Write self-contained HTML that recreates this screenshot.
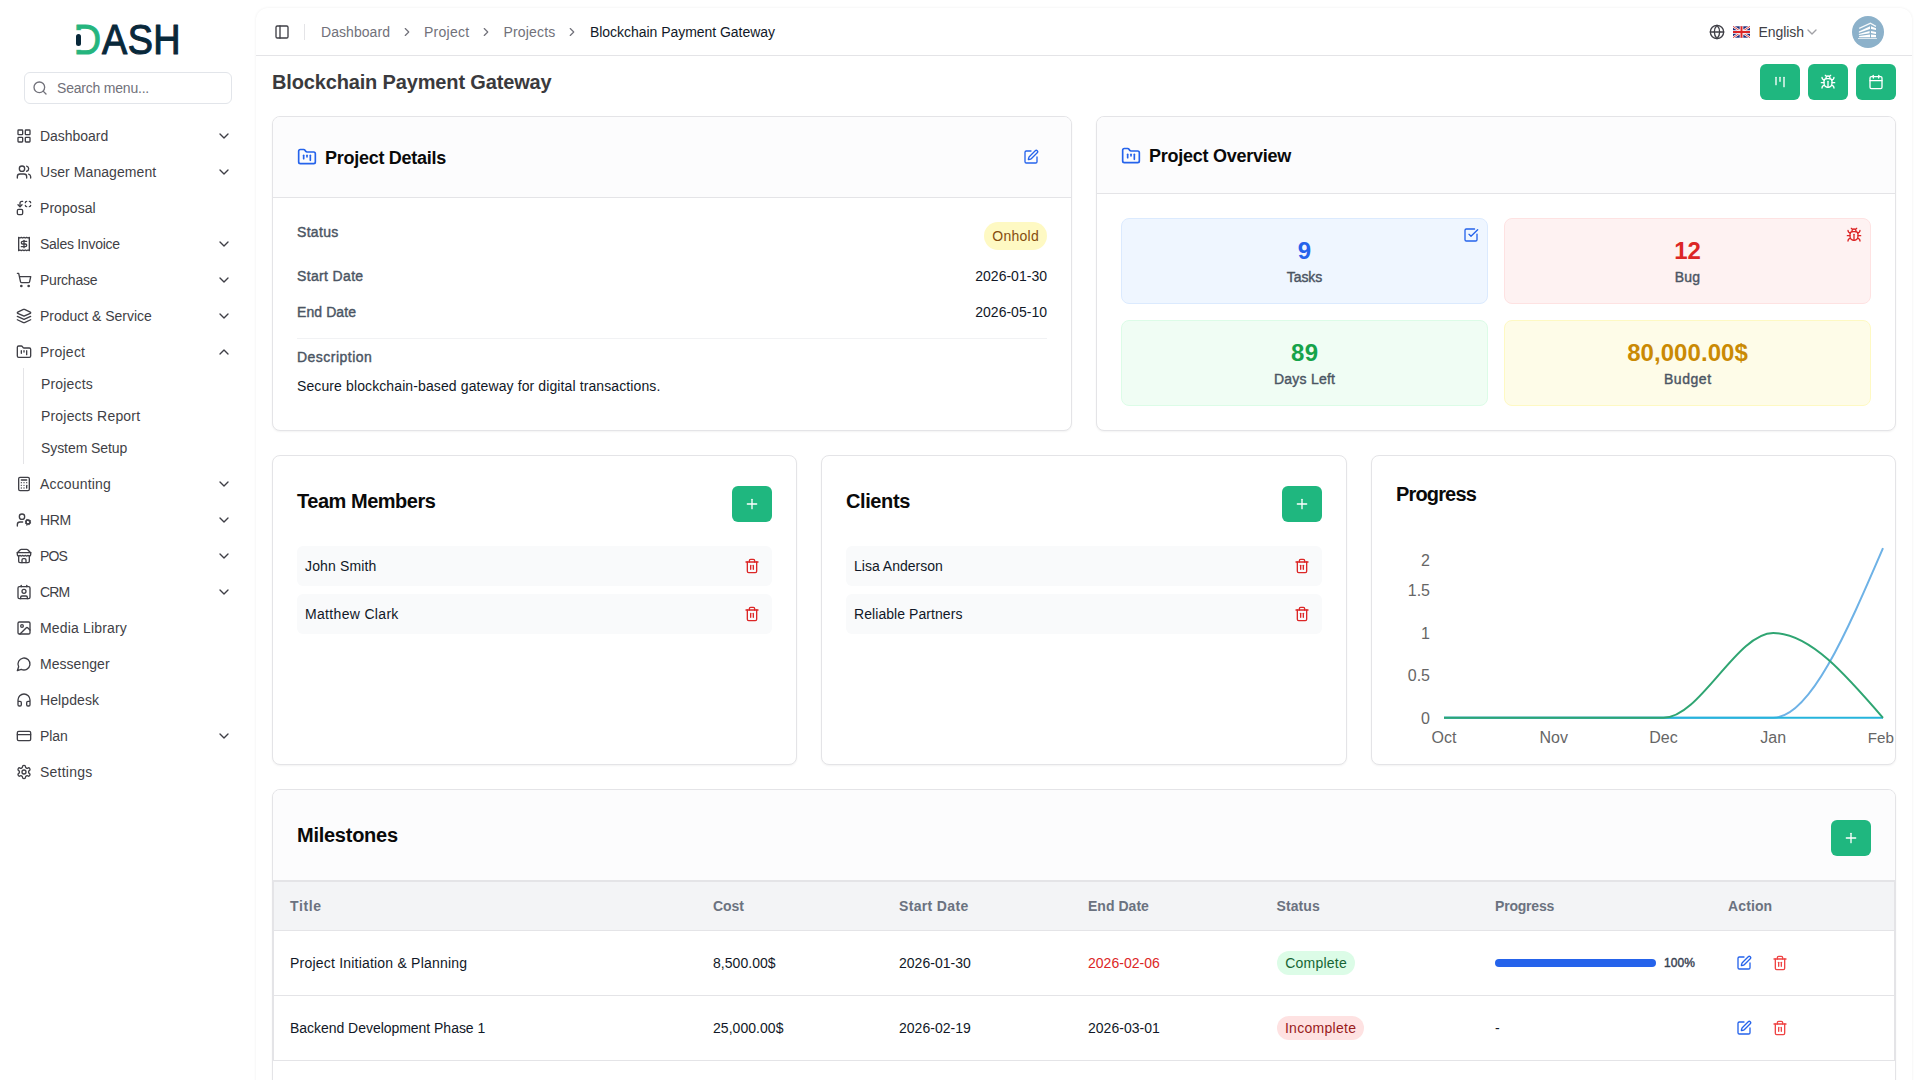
<!DOCTYPE html>
<html lang="en">
<head>
<meta charset="utf-8">
<title>Blockchain Payment Gateway</title>
<style>
*{box-sizing:border-box;margin:0;padding:0}
html,body{width:1920px;height:1080px;overflow:hidden}
body{background:#fff;font-family:"Liberation Sans",sans-serif;font-size:14px;color:#111827;position:relative}
div,span,nav,aside,main,header,section,h1,h2,h3,a,p,ul,li,button,table,thead,tbody,tr,th,td,label{position:absolute;display:block;font:inherit;list-style:none}
.t{white-space:nowrap}
svg.a{position:absolute;display:block}
.ic{fill:none;stroke:currentColor;stroke-width:2;stroke-linecap:round;stroke-linejoin:round}
#sb{left:0;top:0;width:256px;height:1080px;color:#3f3f46}
#main{left:256px;top:8px;width:1656px;height:1100px;background:#fff;border-radius:12px 12px 0 0;box-shadow:0 0 3px rgba(0,0,0,.07)}
.card{background:#fff;border:1px solid #e4e4e7;border-radius:8px;box-shadow:0 1px 2px rgba(0,0,0,.05);overflow:hidden}
.ch{left:0;top:0;background:#fcfcfd;border-bottom:1px solid #e4e4e7}
.btn{background:#1fb77f;border-radius:6px;color:#fff;border:0}
.row{background:#f9fafb;border-radius:6px}
.pill{border-radius:9999px}
.tile{border-radius:8px;border:1px solid}
</style>
</head>
<body>
<aside id="sb"><svg class="a" id="logo" style="left:64px;top:16px" width="128" height="48" viewBox="64 16 128 48"><linearGradient id="lg" gradientUnits="userSpaceOnUse" x1="0" y1="0" x2="200" y2="0"><stop offset="0.5611" stop-color="#25b57e"/><stop offset="0.5611" stop-color="#08283a"/></linearGradient><text transform="scale(0.9 1)" x="81.9 113.22 141.89 170.38" y="54.45" font-family="Liberation Sans, sans-serif" font-size="42" fill="url(#lg)" stroke="url(#lg)" stroke-width="1.1" stroke-linejoin="round">DASH</text><rect x="70" y="30.2" width="12.4" height="19.6" fill="#fff"/><rect x="76" y="34" width="5" height="12" rx="2.5" fill="#08283a"/></svg>
<div id="search" style="left:24px;top:72px;width:208px;height:32px;border:1px solid #e2e5ea;border-radius:6px;background:#fff"><svg class="ic a" width="16" height="16" viewBox="0 0 24 24" style="left:7px;top:7px;color:#71717a"><circle cx="11" cy="11" r="8"/><path d="m21 21-4.300-4.300"/></svg><span class="t" id="t1" style="top:5px;left:32px;font-size:14px;line-height:20px;color:#71717a;letter-spacing:-0.210px">Search menu...</span></div>
<ul style="left:0;top:0;width:256px;height:800px">
<li style="left:8px;top:120px;width:240px;height:32px;border-radius:6px"><svg class="ic a" width="16" height="16" viewBox="0 0 24 24" style="left:8px;top:8px"><rect x="3" y="3" width="7" height="7" rx="1"/><rect x="14" y="3" width="7" height="7" rx="1"/><rect x="14" y="14" width="7" height="7" rx="1"/><rect x="3" y="14" width="7" height="7" rx="1"/></svg><span class="t" id="t2" style="top:6px;left:32px;font-size:14px;line-height:20px;letter-spacing:-0.028px">Dashboard</span><svg class="ic a" width="16" height="16" viewBox="0 0 24 24" style="left:208px;top:8px"><path d="m6 9 6 6 6-6"/></svg></li>
<li style="left:8px;top:156px;width:240px;height:32px;border-radius:6px"><svg class="ic a" width="16" height="16" viewBox="0 0 24 24" style="left:8px;top:8px"><path d="M16 21v-2a4 4 0 0 0-4-4H6a4 4 0 0 0-4 4v2"/><circle cx="9" cy="7" r="4"/><path d="M22 21v-2a4 4 0 0 0-3-3.87"/><path d="M16 3.13a4 4 0 0 1 0 7.75"/></svg><span class="t" id="t3" style="top:6px;left:32px;font-size:14px;line-height:20px;letter-spacing:0.072px">User Management</span><svg class="ic a" width="16" height="16" viewBox="0 0 24 24" style="left:208px;top:8px"><path d="m6 9 6 6 6-6"/></svg></li>
<li style="left:8px;top:192px;width:240px;height:32px;border-radius:6px"><svg class="ic a" width="16" height="16" viewBox="0 0 24 24" style="left:8px;top:8px"><path d="M14 4a2 2 0 0 1 2-2"/><path d="M16 10a2 2 0 0 1-2-2"/><path d="M20 2a2 2 0 0 1 2 2"/><path d="M22 8a2 2 0 0 1-2 2"/><path d="m3 7 3 3 3-3"/><path d="M6 10V5a3 3 0 0 1 3-3h1"/><rect x="2" y="14" width="8" height="8" rx="2"/></svg><span class="t" id="t4" style="top:6px;left:32px;font-size:14px;line-height:20px;letter-spacing:0.061px">Proposal</span></li>
<li style="left:8px;top:228px;width:240px;height:32px;border-radius:6px"><svg class="ic a" width="16" height="16" viewBox="0 0 24 24" style="left:8px;top:8px"><path d="M4 2v20l2-1 2 1 2-1 2 1 2-1 2 1 2-1 2 1V2l-2 1-2-1-2 1-2-1-2 1-2-1-2 1Z"/><path d="M16 8h-6a2 2 0 1 0 0 4h4a2 2 0 1 1 0 4H8"/><path d="M12 17.5v-11"/></svg><span class="t" id="t5" style="top:6px;left:32px;font-size:14px;line-height:20px;letter-spacing:-0.272px">Sales Invoice</span><svg class="ic a" width="16" height="16" viewBox="0 0 24 24" style="left:208px;top:8px"><path d="m6 9 6 6 6-6"/></svg></li>
<li style="left:8px;top:264px;width:240px;height:32px;border-radius:6px"><svg class="ic a" width="16" height="16" viewBox="0 0 24 24" style="left:8px;top:8px"><circle cx="8" cy="21" r="1"/><circle cx="19" cy="21" r="1"/><path d="M2.05 2.05h2l2.66 12.42a2 2 0 0 0 2 1.58h9.78a2 2 0 0 0 1.95-1.57l1.65-7.43H5.12"/></svg><span class="t" id="t6" style="top:6px;left:32px;font-size:14px;line-height:20px;letter-spacing:-0.238px">Purchase</span><svg class="ic a" width="16" height="16" viewBox="0 0 24 24" style="left:208px;top:8px"><path d="m6 9 6 6 6-6"/></svg></li>
<li style="left:8px;top:300px;width:240px;height:32px;border-radius:6px"><svg class="ic a" width="16" height="16" viewBox="0 0 24 24" style="left:8px;top:8px"><path d="m12.83 2.18a2 2 0 0 0-1.66 0L2.6 6.08a1 1 0 0 0 0 1.83l8.58 3.91a2 2 0 0 0 1.66 0l8.58-3.9a1 1 0 0 0 0-1.83Z"/><path d="m22 17.65-9.17 4.16a2 2 0 0 1-1.66 0L2 17.65"/><path d="m22 12.65-9.17 4.16a2 2 0 0 1-1.66 0L2 12.65"/></svg><span class="t" id="t7" style="top:6px;left:32px;font-size:14px;line-height:20px;letter-spacing:-0.018px">Product &amp; Service</span><svg class="ic a" width="16" height="16" viewBox="0 0 24 24" style="left:208px;top:8px"><path d="m6 9 6 6 6-6"/></svg></li>
<li style="left:8px;top:336px;width:240px;height:32px;border-radius:6px"><svg class="ic a" width="16" height="16" viewBox="0 0 24 24" style="left:8px;top:8px"><path d="M4 20h16a2 2 0 0 0 2-2V8a2 2 0 0 0-2-2h-7.93a2 2 0 0 1-1.66-.9l-.82-1.2A2 2 0 0 0 7.93 3H4a2 2 0 0 0-2 2v13c0 1.1.9 2 2 2Z"/><path d="M8 10v4"/><path d="M12 10v2"/><path d="M16 10v6"/></svg><span class="t" id="t8" style="top:6px;left:32px;font-size:14px;line-height:20px;letter-spacing:0.239px">Project</span><svg class="ic a" width="16" height="16" viewBox="0 0 24 24" style="left:208px;top:8px"><path d="m18 15-6-6-6 6"/></svg></li>
<li style="left:8px;top:468px;width:240px;height:32px;border-radius:6px"><svg class="ic a" width="16" height="16" viewBox="0 0 24 24" style="left:8px;top:8px"><rect width="16" height="20" x="4" y="2" rx="2"/><line x1="8" x2="16" y1="6" y2="6"/><line x1="16" x2="16" y1="14" y2="18"/><path d="M16 10h.01"/><path d="M12 10h.01"/><path d="M8 10h.01"/><path d="M12 14h.01"/><path d="M8 14h.01"/><path d="M12 18h.01"/><path d="M8 18h.01"/></svg><span class="t" id="t9" style="top:6px;left:32px;font-size:14px;line-height:20px;letter-spacing:0.172px">Accounting</span><svg class="ic a" width="16" height="16" viewBox="0 0 24 24" style="left:208px;top:8px"><path d="m6 9 6 6 6-6"/></svg></li>
<li style="left:8px;top:504px;width:240px;height:32px;border-radius:6px"><svg class="ic a" width="16" height="16" viewBox="0 0 24 24" style="left:8px;top:8px"><circle cx="18" cy="15" r="3"/><circle cx="9" cy="7" r="4"/><path d="M10 15H6a4 4 0 0 0-4 4v2"/><path d="m21.7 16.4-.9-.3"/><path d="m15.2 13.9-.9-.3"/><path d="m16.6 18.700-.3.900"/><path d="m19.100 12.200-.3.900"/><path d="m19.600 18.700-.4-1"/><path d="m16.800 12.300-.4-1"/><path d="m14.300 16.600 1-.4"/><path d="m20.700 13.800 1-.4"/></svg><span class="t" id="t10" style="top:6px;left:32px;font-size:14px;line-height:20px;letter-spacing:-0.397px">HRM</span><svg class="ic a" width="16" height="16" viewBox="0 0 24 24" style="left:208px;top:8px"><path d="m6 9 6 6 6-6"/></svg></li>
<li style="left:8px;top:540px;width:240px;height:32px;border-radius:6px"><svg class="ic a" width="16" height="16" viewBox="0 0 24 24" style="left:8px;top:8px"><path d="m2 7 4.410-4.410A2 2 0 0 1 7.830 2h8.340a2 2 0 0 1 1.420.590L22 7"/><path d="M4 12v8a2 2 0 0 0 2 2h12a2 2 0 0 0 2-2v-8"/><path d="M15 22v-4a2 2 0 0 0-2-2h-2a2 2 0 0 0-2 2v4"/><path d="M2 7h20"/><path d="M22 7v3a2 2 0 0 1-2 2a2.700 2.700 0 0 1-1.590-.630.700.700 0 0 0-.820 0A2.700 2.700 0 0 1 16 12a2.700 2.700 0 0 1-1.590-.630.700.700 0 0 0-.820 0A2.700 2.700 0 0 1 12 12a2.700 2.700 0 0 1-1.590-.630.700.700 0 0 0-.820 0A2.700 2.700 0 0 1 8 12a2.700 2.700 0 0 1-1.590-.630.700.700 0 0 0-.820 0A2.700 2.700 0 0 1 4 12a2 2 0 0 1-2-2V7"/></svg><span class="t" id="t11" style="top:6px;left:32px;font-size:14px;line-height:20px;letter-spacing:-0.893px">POS</span><svg class="ic a" width="16" height="16" viewBox="0 0 24 24" style="left:208px;top:8px"><path d="m6 9 6 6 6-6"/></svg></li>
<li style="left:8px;top:576px;width:240px;height:32px;border-radius:6px"><svg class="ic a" width="16" height="16" viewBox="0 0 24 24" style="left:8px;top:8px"><path d="M16 2v2"/><path d="M7 22v-2a2 2 0 0 1 2-2h6a2 2 0 0 1 2 2v2"/><path d="M8 2v2"/><circle cx="12" cy="11" r="3"/><rect x="3" y="4" width="18" height="18" rx="2"/></svg><span class="t" id="t12" style="top:6px;left:32px;font-size:14px;line-height:20px;letter-spacing:-0.830px">CRM</span><svg class="ic a" width="16" height="16" viewBox="0 0 24 24" style="left:208px;top:8px"><path d="m6 9 6 6 6-6"/></svg></li>
<li style="left:8px;top:612px;width:240px;height:32px;border-radius:6px"><svg class="ic a" width="16" height="16" viewBox="0 0 24 24" style="left:8px;top:8px"><rect width="18" height="18" x="3" y="3" rx="2" ry="2"/><circle cx="9" cy="9" r="2"/><path d="m21 15-3.086-3.086a2 2 0 0 0-2.828 0L6 21"/></svg><span class="t" id="t13" style="top:6px;left:32px;font-size:14px;line-height:20px;letter-spacing:0.159px">Media Library</span></li>
<li style="left:8px;top:648px;width:240px;height:32px;border-radius:6px"><svg class="ic a" width="16" height="16" viewBox="0 0 24 24" style="left:8px;top:8px"><path d="M7.9 20A9 9 0 1 0 4 16.1L2 22Z"/></svg><span class="t" id="t14" style="top:6px;left:32px;font-size:14px;line-height:20px;letter-spacing:0.037px">Messenger</span></li>
<li style="left:8px;top:684px;width:240px;height:32px;border-radius:6px"><svg class="ic a" width="16" height="16" viewBox="0 0 24 24" style="left:8px;top:8px"><path d="M3 14h3a2 2 0 0 1 2 2v3a2 2 0 0 1-2 2H5a2 2 0 0 1-2-2v-7a9 9 0 0 1 18 0v7a2 2 0 0 1-2 2h-1a2 2 0 0 1-2-2v-3a2 2 0 0 1 2-2h3"/></svg><span class="t" id="t15" style="top:6px;left:32px;font-size:14px;line-height:20px;letter-spacing:0.091px">Helpdesk</span></li>
<li style="left:8px;top:720px;width:240px;height:32px;border-radius:6px"><svg class="ic a" width="16" height="16" viewBox="0 0 24 24" style="left:8px;top:8px"><rect width="20" height="14" x="2" y="5" rx="2"/><line x1="2" x2="22" y1="10" y2="10"/></svg><span class="t" id="t16" style="top:6px;left:32px;font-size:14px;line-height:20px;letter-spacing:-0.083px">Plan</span><svg class="ic a" width="16" height="16" viewBox="0 0 24 24" style="left:208px;top:8px"><path d="m6 9 6 6 6-6"/></svg></li>
<li style="left:8px;top:756px;width:240px;height:32px;border-radius:6px"><svg class="ic a" width="16" height="16" viewBox="0 0 24 24" style="left:8px;top:8px"><path d="M12.22 2h-.44a2 2 0 0 0-2 2v.18a2 2 0 0 1-1 1.73l-.43.25a2 2 0 0 1-2 0l-.15-.08a2 2 0 0 0-2.73.73l-.22.38a2 2 0 0 0 .73 2.73l.15.1a2 2 0 0 1 1 1.72v.51a2 2 0 0 1-1 1.74l-.15.09a2 2 0 0 0-.73 2.73l.22.38a2 2 0 0 0 2.73.73l.15-.08a2 2 0 0 1 2 0l.43.25a2 2 0 0 1 1 1.730V20a2 2 0 0 0 2 2h.44a2 2 0 0 0 2-2v-.18a2 2 0 0 1 1-1.73l.43-.25a2 2 0 0 1 2 0l.15.08a2 2 0 0 0 2.73-.73l.22-.39a2 2 0 0 0-.73-2.73l-.15-.08a2 2 0 0 1-1-1.74v-.5a2 2 0 0 1 1-1.74l.15-.09a2 2 0 0 0 .73-2.73l-.22-.38a2 2 0 0 0-2.73-.73l-.15.08a2 2 0 0 1-2 0l-.43-.25a2 2 0 0 1-1-1.73V4a2 2 0 0 0-2-2z"/><circle cx="12" cy="12" r="3"/></svg><span class="t" id="t17" style="top:6px;left:32px;font-size:14px;line-height:20px;letter-spacing:0.226px">Settings</span></li>
<li style="left:29px;top:370px;width:211px;height:28px;"><span class="t" id="t18" style="top:4px;left:12px;font-size:14px;line-height:20px;letter-spacing:0.178px">Projects</span></li>
<li style="left:29px;top:402px;width:211px;height:28px;"><span class="t" id="t19" style="top:4px;left:12px;font-size:14px;line-height:20px;letter-spacing:0.184px">Projects Report</span></li>
<li style="left:29px;top:434px;width:211px;height:28px;"><span class="t" id="t20" style="top:4px;left:12px;font-size:14px;line-height:20px;letter-spacing:-0.076px">System Setup</span></li>
</ul>
<div style="left:23px;top:368px;width:1px;height:96px;background:#e4e4e7"></div></aside>
<main id="main"><header id="hdr" style="left:0px;top:0px;width:1656px;height:48px;border-bottom:1px solid #e4e4e7"><svg class="ic a" width="16" height="16" viewBox="0 0 24 24" style="left:18px;top:16px;color:#3f3f46"><rect width="18" height="18" x="3" y="3" rx="2"/><path d="M9 3v18"/></svg><div style="left:48px;top:16px;width:1px;height:16px;background:#e4e4e7"></div><span class="t" id="t21" style="top:14px;left:65px;font-size:14px;line-height:20px;color:#71717a;letter-spacing:0.056px">Dashboard</span><svg class="ic a" width="14" height="14" viewBox="0 0 24 24" style="left:143.5px;top:17px;color:#71717a"><path d="m9 18 6-6-6-6"/></svg><span class="t" id="t22" style="top:14px;left:168px;font-size:14px;line-height:20px;color:#71717a;letter-spacing:0.275px">Project</span><svg class="ic a" width="14" height="14" viewBox="0 0 24 24" style="left:222.8px;top:17px;color:#71717a"><path d="m9 18 6-6-6-6"/></svg><span class="t" id="t23" style="top:14px;left:247.5px;font-size:14px;line-height:20px;color:#71717a;letter-spacing:0.178px">Projects</span><svg class="ic a" width="14" height="14" viewBox="0 0 24 24" style="left:309px;top:17px;color:#71717a"><path d="m9 18 6-6-6-6"/></svg><span class="t" id="t24" style="top:14px;left:334px;font-size:14px;line-height:20px;color:#111827;letter-spacing:-0.038px">Blockchain Payment Gateway</span><svg class="ic a" width="16" height="16" viewBox="0 0 24 24" style="left:1452.5px;top:16px;color:#3f3f46"><circle cx="12" cy="12" r="10"/><path d="M12 2a14.500 14.500 0 0 0 0 20 14.500 14.500 0 0 0 0-20"/><path d="M2 12h20"/></svg><svg class="a" style="left:1477px;top:18px" width="17" height="12" viewBox="0 0 60 40"><rect width="60" height="40" fill="#1b2a78"/><path d="M0 0 60 40M60 0 0 40" stroke="#fff" stroke-width="8"/><path d="M0 0 60 40M60 0 0 40" stroke="#dc2626" stroke-width="3"/><path d="M30 0v40M0 20h60" stroke="#fff" stroke-width="13"/><path d="M30 0v40M0 20h60" stroke="#dc2626" stroke-width="7"/></svg><span class="t" id="t25" style="top:14px;left:1502.5px;font-size:14px;line-height:20px;color:#3f3f46;letter-spacing:-0.060px">English</span><svg class="ic a" width="16" height="16" viewBox="0 0 24 24" style="left:1548.2px;top:16px;color:#a1a1a6"><path d="m6 9 6 6 6-6"/></svg><svg class="a" style="left:1596px;top:8px" width="32" height="32" viewBox="0 0 32 32"><circle cx="16" cy="16" r="16" fill="#8cb1ca"/><g fill="#fff"><path d="M7 11.700 18.400 6.500 24.200 9.800 23.800 10.900 18.400 7.900 7.400 12.900z" opacity=".92"/><path d="M6.900 15.400 18 10.200 18 12.900 6.900 16.700z"/><path d="M6.900 17.900 17.600 15 17.600 17.300 6.900 19.100z"/><path d="M7.100 20.100 18 18.600 18 21.200 7.100 21.200z"/><path d="M19 10.300 24 12.300 24 14.100 19 12.900z"/><path d="M19 15.100 24 16 24 17.900 19 16.900z"/><path d="M19 18.600 24 19.100 24 21.200 19 21.200z"/><path d="M6 22 24.900 22 24.900 23 6 23z" opacity=".7"/></g></svg></header>
<h1 class="t" id="t26" style="top:60px;left:16px;font-size:20px;line-height:28px;font-weight:700;color:#3a3a3d;letter-spacing:-0.152px">Blockchain Payment Gateway</h1>
<div class="btn" style="left:1504px;top:56px;width:40px;height:36px;"><svg class="ic a" width="16" height="16" viewBox="0 0 24 24" style="left:12px;top:10px;color:#fff"><path d="M6 5v11"/><path d="M12 5v6"/><path d="M18 5v14"/></svg></div>
<div class="btn" style="left:1552px;top:56px;width:40px;height:36px;"><svg class="ic a" width="16" height="16" viewBox="0 0 24 24" style="left:12px;top:10px;color:#fff"><path d="m8 2 1.880 1.880"/><path d="M14.120 3.880 16 2"/><path d="M9 7.130v-1a3.003 3.003 0 1 1 6 0v1"/><path d="M12 20c-3.300 0-6-2.700-6-6v-3a4 4 0 0 1 4-4h4a4 4 0 0 1 4 4v3c0 3.300-2.700 6-6 6"/><path d="M12 20v-9"/><path d="M6.530 9C4.600 8.800 3 7.100 3 5"/><path d="M6 13H2"/><path d="M3 21c0-2.100 1.700-3.900 3.800-4"/><path d="M20.970 5c0 2.100-1.600 3.800-3.500 4"/><path d="M22 13h-4"/><path d="M17.200 17c2.100.100 3.800 1.900 3.800 4"/></svg></div>
<div class="btn" style="left:1600px;top:56px;width:40px;height:36px;"><svg class="ic a" width="16" height="16" viewBox="0 0 24 24" style="left:12px;top:10px;color:#fff"><path d="M8 2v4"/><path d="M16 2v4"/><rect width="18" height="18" x="3" y="4" rx="2"/><path d="M3 10h18"/></svg></div>
<section class="card" style="left:16px;top:108px;width:800px;height:315px;"><div class="ch" style="left:0px;top:0px;width:798px;height:81px;"><svg class="ic a" width="20" height="20" viewBox="0 0 24 24" style="left:24px;top:30px;color:#2563eb"><path d="M4 20h16a2 2 0 0 0 2-2V8a2 2 0 0 0-2-2h-7.93a2 2 0 0 1-1.66-.9l-.82-1.2A2 2 0 0 0 7.93 3H4a2 2 0 0 0-2 2v13c0 1.1.9 2 2 2Z"/><path d="M8 10v4"/><path d="M12 10v2"/><path d="M16 10v6"/></svg><h3 class="t" id="t27" style="top:26.6px;left:52px;font-size:18px;line-height:28px;font-weight:700;color:#0a0a0a;letter-spacing:-0.271px">Project Details</h3><svg class="ic a" width="16" height="16" viewBox="0 0 24 24" style="left:750px;top:32px;color:#2563eb"><path d="M12 3H5a2 2 0 0 0-2 2v14a2 2 0 0 0 2 2h14a2 2 0 0 0 2-2v-7"/><path d="M18.375 2.625a1 1 0 0 1 3 3l-9.013 9.014a2 2 0 0 1-.853.505l-2.873.840a.500.500 0 0 1-.620-.620l.840-2.873a2 2 0 0 1 .506-.852z"/></svg></div><span class="t" id="t28" style="top:105px;left:24px;font-size:14px;line-height:20px;font-weight:500;-webkit-text-stroke:.4px;color:#4b5563;letter-spacing:0.316px">Status</span><div class="pill" style="left:711px;top:105px;width:63px;height:28px;background:#fef9c3"><span class="t" id="t29" style="top:4px;left:31.5px;transform:translateX(-50%);font-size:14px;line-height:20px;color:#854d0e;letter-spacing:0.291px;margin-left:0.145px">Onhold</span></div><span class="t" id="t30" style="top:149px;left:24px;font-size:14px;line-height:20px;font-weight:500;-webkit-text-stroke:.4px;color:#4b5563;letter-spacing:0.347px">Start Date</span><span class="t" id="t31" style="top:149px;left:774px;transform:translateX(-100%);font-size:14px;line-height:20px;color:#111827;letter-spacing:0.017px;margin-left:0.017px">2026-01-30</span><span class="t" id="t32" style="top:185px;left:24px;font-size:14px;line-height:20px;font-weight:500;-webkit-text-stroke:.4px;color:#4b5563;letter-spacing:0.091px">End Date</span><span class="t" id="t33" style="top:185px;left:774px;transform:translateX(-100%);font-size:14px;line-height:20px;color:#111827;letter-spacing:0.017px;margin-left:0.017px">2026-05-10</span><div style="left:24px;top:221px;width:750px;height:1px;background:#f1f2f4"></div><span class="t" id="t34" style="top:230px;left:24px;font-size:14px;line-height:20px;font-weight:500;-webkit-text-stroke:.4px;color:#4b5563;letter-spacing:0.479px">Description</span><p class="t" id="t35" style="top:259px;left:24px;font-size:14px;line-height:20px;color:#111827;letter-spacing:0.110px">Secure blockchain-based gateway for digital transactions.</p></section>
<section class="card" style="left:840px;top:108px;width:800px;height:315px;"><div class="ch" style="left:0px;top:0px;width:798px;height:77px;"><svg class="ic a" width="20" height="20" viewBox="0 0 24 24" style="left:24px;top:28.5px;color:#2563eb"><path d="M4 20h16a2 2 0 0 0 2-2V8a2 2 0 0 0-2-2h-7.93a2 2 0 0 1-1.66-.9l-.82-1.2A2 2 0 0 0 7.93 3H4a2 2 0 0 0-2 2v13c0 1.1.9 2 2 2Z"/><path d="M8 10v4"/><path d="M12 10v2"/><path d="M16 10v6"/></svg><h3 class="t" id="t36" style="top:25px;left:52px;font-size:18px;line-height:28px;font-weight:700;color:#0a0a0a;letter-spacing:-0.255px">Project Overview</h3></div><div class="tile" style="left:24px;top:101px;width:367px;height:86px;background:#eff6ff;border-color:#dbeafe"><span class="t" id="t37" style="top:16px;left:182.5px;transform:translateX(-50%);font-size:24px;line-height:32px;font-weight:700;color:#2563eb;letter-spacing:0.141px;margin-left:0.070px">9</span><span class="t" id="t38" style="top:48px;left:182.5px;transform:translateX(-50%);font-size:14px;line-height:20px;font-weight:500;-webkit-text-stroke:.4px;color:#4b5563;letter-spacing:-0.059px;margin-left:-0.030px">Tasks</span><svg class="ic a" width="16" height="16" viewBox="0 0 24 24" style="left:341px;top:8px;color:#2563eb"><path d="M21 10.656V19a2 2 0 0 1-2 2H5a2 2 0 0 1-2-2V5a2 2 0 0 1 2-2h12.344"/><path d="m9 11 3 3L22 4"/></svg></div><div class="tile" style="left:407px;top:101px;width:367px;height:86px;background:#fef2f2;border-color:#fee2e2"><span class="t" id="t39" style="top:16px;left:182.5px;transform:translateX(-50%);font-size:24px;line-height:32px;font-weight:700;color:#dc2626;letter-spacing:-0.202px;margin-left:-0.101px">12</span><span class="t" id="t40" style="top:48px;left:182.5px;transform:translateX(-50%);font-size:14px;line-height:20px;font-weight:500;-webkit-text-stroke:.4px;color:#4b5563;letter-spacing:0.193px;margin-left:0.096px">Bug</span><svg class="ic a" width="16" height="16" viewBox="0 0 24 24" style="left:341px;top:8px;color:#dc2626"><path d="m8 2 1.880 1.880"/><path d="M14.120 3.880 16 2"/><path d="M9 7.130v-1a3.003 3.003 0 1 1 6 0v1"/><path d="M12 20c-3.300 0-6-2.700-6-6v-3a4 4 0 0 1 4-4h4a4 4 0 0 1 4 4v3c0 3.300-2.700 6-6 6"/><path d="M12 20v-9"/><path d="M6.530 9C4.600 8.800 3 7.100 3 5"/><path d="M6 13H2"/><path d="M3 21c0-2.100 1.700-3.900 3.800-4"/><path d="M20.970 5c0 2.100-1.600 3.800-3.500 4"/><path d="M22 13h-4"/><path d="M17.200 17c2.100.100 3.800 1.900 3.800 4"/></svg></div><div class="tile" style="left:24px;top:203px;width:367px;height:86px;background:#f0fdf4;border-color:#dcfce7"><span class="t" id="t41" style="top:16px;left:182.5px;transform:translateX(-50%);font-size:24px;line-height:32px;font-weight:700;color:#16a34a;letter-spacing:0.398px;margin-left:0.199px">89</span><span class="t" id="t42" style="top:48px;left:182.5px;transform:translateX(-50%);font-size:14px;line-height:20px;font-weight:500;-webkit-text-stroke:.4px;color:#4b5563;letter-spacing:0.240px;margin-left:0.120px">Days Left</span></div><div class="tile" style="left:407px;top:203px;width:367px;height:86px;background:#fefce8;border-color:#fef9c3"><span class="t" id="t43" style="top:16px;left:182.5px;transform:translateX(-50%);font-size:24px;line-height:32px;font-weight:700;color:#ca8a04;letter-spacing:0.067px;margin-left:0.034px">80,000.00$</span><span class="t" id="t44" style="top:48px;left:182.5px;transform:translateX(-50%);font-size:14px;line-height:20px;font-weight:500;-webkit-text-stroke:.4px;color:#4b5563;letter-spacing:0.562px;margin-left:0.281px">Budget</span></div></section>
<section class="card" style="left:16px;top:447px;width:525px;height:310px;"><h3 class="t" id="t45" style="top:31px;left:24px;font-size:20px;line-height:28px;font-weight:700;color:#0a0a0a;letter-spacing:-0.470px">Team Members</h3><div class="btn" style="left:459px;top:30px;width:40px;height:36px;"><svg class="ic a" width="16" height="16" viewBox="0 0 24 24" style="left:12px;top:10px;color:#fff"><path d="M5 12h14"/><path d="M12 5v14"/></svg></div><div class="row" style="left:24px;top:90px;width:475px;height:40px;"><span class="t" id="t46" style="top:10px;left:8px;font-size:14px;line-height:20px;color:#111827;letter-spacing:0.135px">John Smith</span><svg class="ic a" width="16" height="16" viewBox="0 0 24 24" style="left:446.7px;top:12px;color:#dc2626"><path d="M3 6h18"/><path d="M19 6v14c0 1-1 2-2 2H7c-1 0-2-1-2-2V6"/><path d="M8 6V4c0-1 1-2 2-2h4c1 0 2 1 2 2v2"/><line x1="10" x2="10" y1="11" y2="17"/><line x1="14" x2="14" y1="11" y2="17"/></svg></div><div class="row" style="left:24px;top:138px;width:475px;height:40px;"><span class="t" id="t47" style="top:10px;left:8px;font-size:14px;line-height:20px;color:#111827;letter-spacing:0.325px">Matthew Clark</span><svg class="ic a" width="16" height="16" viewBox="0 0 24 24" style="left:446.7px;top:12px;color:#dc2626"><path d="M3 6h18"/><path d="M19 6v14c0 1-1 2-2 2H7c-1 0-2-1-2-2V6"/><path d="M8 6V4c0-1 1-2 2-2h4c1 0 2 1 2 2v2"/><line x1="10" x2="10" y1="11" y2="17"/><line x1="14" x2="14" y1="11" y2="17"/></svg></div></section>
<section class="card" style="left:565px;top:447px;width:525.5px;height:310px;"><h3 class="t" id="t48" style="top:31px;left:24px;font-size:20px;line-height:28px;font-weight:700;color:#0a0a0a;letter-spacing:-0.398px">Clients</h3><div class="btn" style="left:460px;top:30px;width:40px;height:36px;"><svg class="ic a" width="16" height="16" viewBox="0 0 24 24" style="left:12px;top:10px;color:#fff"><path d="M5 12h14"/><path d="M12 5v14"/></svg></div><div class="row" style="left:24px;top:90px;width:476px;height:40px;"><span class="t" id="t49" style="top:10px;left:8px;font-size:14px;line-height:20px;color:#111827;letter-spacing:0.013px">Lisa Anderson</span><svg class="ic a" width="16" height="16" viewBox="0 0 24 24" style="left:447.7px;top:12px;color:#dc2626"><path d="M3 6h18"/><path d="M19 6v14c0 1-1 2-2 2H7c-1 0-2-1-2-2V6"/><path d="M8 6V4c0-1 1-2 2-2h4c1 0 2 1 2 2v2"/><line x1="10" x2="10" y1="11" y2="17"/><line x1="14" x2="14" y1="11" y2="17"/></svg></div><div class="row" style="left:24px;top:138px;width:476px;height:40px;"><span class="t" id="t50" style="top:10px;left:8px;font-size:14px;line-height:20px;color:#111827;letter-spacing:0.065px">Reliable Partners</span><svg class="ic a" width="16" height="16" viewBox="0 0 24 24" style="left:447.7px;top:12px;color:#dc2626"><path d="M3 6h18"/><path d="M19 6v14c0 1-1 2-2 2H7c-1 0-2-1-2-2V6"/><path d="M8 6V4c0-1 1-2 2-2h4c1 0 2 1 2 2v2"/><line x1="10" x2="10" y1="11" y2="17"/><line x1="14" x2="14" y1="11" y2="17"/></svg></div></section>
<section class="card" style="left:1114.67px;top:447px;width:525.33px;height:310px;"><h3 class="t" id="t51" style="top:23.6px;left:24.33px;font-size:20px;line-height:28px;font-weight:700;color:#0a0a0a;letter-spacing:-0.840px">Progress</h3><svg class="a" style="left:0.33px;top:74px" width="523" height="230" viewBox="1372 530 523 230" font-family="Liberation Sans, sans-serif" font-size="16" fill="#666"><path d="M1444.00,717.80C1480.58,717.80,1517.17,717.80,1553.75,717.80C1590.33,717.80,1626.92,717.80,1663.50,717.80C1700.08,717.80,1736.67,717.80,1773.25,717.80C1809.83,717.80,1846.42,633.00,1883.00,548.20" fill="none" stroke="#6eb2e6" stroke-width="2"/><path d="M1444.00,717.80C1480.58,717.80,1517.17,717.80,1553.75,717.80C1590.33,717.80,1626.92,717.80,1663.50,717.80C1700.08,717.80,1736.67,717.80,1773.25,717.80C1809.83,717.80,1846.42,717.80,1883.00,717.80" fill="none" stroke="#26b4dc" stroke-width="2"/><path d="M1444.00,717.80C1480.58,717.80,1517.17,717.80,1553.75,717.80C1590.33,717.80,1626.92,717.80,1663.50,717.80C1700.08,717.80,1736.67,633.00,1773.25,633.00C1809.83,633.00,1846.42,675.40,1883.00,717.80" fill="none" stroke="#2fa572" stroke-width="2"/><text x="1430" y="566" text-anchor="end">2</text><text x="1430" y="596.2" text-anchor="end">1.5</text><text x="1430" y="638.7" text-anchor="end">1</text><text x="1430" y="681.1" text-anchor="end">0.5</text><text x="1430" y="723.5" text-anchor="end">0</text><text x="1444" y="743.2" text-anchor="middle">Oct</text><text x="1553.75" y="743.2" text-anchor="middle">Nov</text><text x="1663.5" y="743.2" text-anchor="middle">Dec</text><text x="1773.25" y="743.2" text-anchor="middle">Jan</text><text x="1867.8" y="743.2" font-size="15.2">Feb</text></svg></section>
<section class="card" style="left:16px;top:781px;width:1624px;height:330px;border-radius:8px 8px 0 0"><div class="ch" style="left:0px;top:0px;width:1622px;height:91px;"><h3 class="t" id="t52" style="top:31px;left:24px;font-size:20px;line-height:28px;font-weight:700;color:#0a0a0a;letter-spacing:-0.256px">Milestones</h3><div class="btn" style="left:1558px;top:30px;width:40px;height:36px;"><svg class="ic a" width="16" height="16" viewBox="0 0 24 24" style="left:12px;top:10px;color:#fff"><path d="M5 12h14"/><path d="M12 5v14"/></svg></div></div><div style="left:0px;top:91px;width:1622px;height:50px;background:#f3f4f6;border:1px solid #e4e4e7"><span class="t" id="t53" style="top:14px;left:16px;font-size:14px;line-height:20px;font-weight:700;color:#6b7280;letter-spacing:0.654px">Title</span><span class="t" id="t54" style="top:14px;left:439px;font-size:14px;line-height:20px;font-weight:700;color:#6b7280;letter-spacing:-0.106px">Cost</span><span class="t" id="t55" style="top:14px;left:625px;font-size:14px;line-height:20px;font-weight:700;color:#6b7280;letter-spacing:0.346px">Start Date</span><span class="t" id="t56" style="top:14px;left:814px;font-size:14px;line-height:20px;font-weight:700;color:#6b7280;letter-spacing:0.027px">End Date</span><span class="t" id="t57" style="top:14px;left:1002.5px;font-size:14px;line-height:20px;font-weight:700;color:#6b7280;letter-spacing:0.101px">Status</span><span class="t" id="t58" style="top:14px;left:1221px;font-size:14px;line-height:20px;font-weight:700;color:#6b7280;letter-spacing:-0.200px">Progress</span><span class="t" id="t59" style="top:14px;left:1454px;font-size:14px;line-height:20px;font-weight:700;color:#6b7280;letter-spacing:0.115px">Action</span></div><div style="left:0px;top:141px;width:1622px;height:65px;border-bottom:1px solid #e4e4e7;border-left:1px solid #e4e4e7;border-right:1px solid #e4e4e7"><span class="t" id="t60" style="top:22px;left:16px;font-size:14px;line-height:20px;color:#111827;letter-spacing:0.208px">Project Initiation &amp; Planning</span><span class="t" id="t61" style="top:22px;left:439px;font-size:14px;line-height:20px;color:#111827;letter-spacing:0.034px">8,500.00$</span><span class="t" id="t62" style="top:22px;left:625px;font-size:14px;line-height:20px;color:#111827;letter-spacing:0.017px">2026-01-30</span><span class="t" id="t63" style="top:22px;left:814px;font-size:14px;line-height:20px;color:#dc2626;letter-spacing:0.017px">2026-02-06</span><div class="pill" style="left:1003px;top:20px;width:78px;height:24px;background:#dcfce7"><span class="t" id="t64" style="top:2px;left:39px;transform:translateX(-50%);font-size:14px;line-height:20px;color:#166534;letter-spacing:0.229px;margin-left:0.114px">Complete</span></div><div class="pill" style="left:1221px;top:28px;width:161px;height:8px;background:#2563eb"></div><span class="t" id="t65" style="top:24px;left:1390px;font-size:12px;line-height:16px;font-weight:500;-webkit-text-stroke:.4px;color:#374151;letter-spacing:0.099px">100%</span><svg class="ic a" width="16" height="16" viewBox="0 0 24 24" style="left:1461.7px;top:24px;color:#2563eb"><path d="M12 3H5a2 2 0 0 0-2 2v14a2 2 0 0 0 2 2h14a2 2 0 0 0 2-2v-7"/><path d="M18.375 2.625a1 1 0 0 1 3 3l-9.013 9.014a2 2 0 0 1-.853.505l-2.873.840a.500.500 0 0 1-.620-.620l.840-2.873a2 2 0 0 1 .506-.852z"/></svg><svg class="ic a" width="16" height="16" viewBox="0 0 24 24" style="left:1498px;top:24px;color:#ef4444"><path d="M3 6h18"/><path d="M19 6v14c0 1-1 2-2 2H7c-1 0-2-1-2-2V6"/><path d="M8 6V4c0-1 1-2 2-2h4c1 0 2 1 2 2v2"/><line x1="10" x2="10" y1="11" y2="17"/><line x1="14" x2="14" y1="11" y2="17"/></svg></div><div style="left:0px;top:206px;width:1622px;height:65px;border-bottom:1px solid #e4e4e7;border-left:1px solid #e4e4e7;border-right:1px solid #e4e4e7"><span class="t" id="t66" style="top:22px;left:16px;font-size:14px;line-height:20px;color:#111827;letter-spacing:-0.034px">Backend Development Phase 1</span><span class="t" id="t67" style="top:22px;left:439px;font-size:14px;line-height:20px;color:#111827;letter-spacing:0.042px">25,000.00$</span><span class="t" id="t68" style="top:22px;left:625px;font-size:14px;line-height:20px;color:#111827;letter-spacing:0.017px">2026-02-19</span><span class="t" id="t69" style="top:22px;left:814px;font-size:14px;line-height:20px;color:#111827;letter-spacing:0.017px">2026-03-01</span><div class="pill" style="left:1003px;top:20px;width:87px;height:24px;background:#fee2e2"><span class="t" id="t70" style="top:2px;left:43.5px;transform:translateX(-50%);font-size:14px;line-height:20px;color:#991b1b;letter-spacing:0.292px;margin-left:0.146px">Incomplete</span></div><span class="t" id="t71" style="top:22px;left:1221px;font-size:14px;line-height:20px;color:#111827">-</span><svg class="ic a" width="16" height="16" viewBox="0 0 24 24" style="left:1461.7px;top:24px;color:#2563eb"><path d="M12 3H5a2 2 0 0 0-2 2v14a2 2 0 0 0 2 2h14a2 2 0 0 0 2-2v-7"/><path d="M18.375 2.625a1 1 0 0 1 3 3l-9.013 9.014a2 2 0 0 1-.853.505l-2.873.840a.500.500 0 0 1-.620-.620l.840-2.873a2 2 0 0 1 .506-.852z"/></svg><svg class="ic a" width="16" height="16" viewBox="0 0 24 24" style="left:1498px;top:24px;color:#ef4444"><path d="M3 6h18"/><path d="M19 6v14c0 1-1 2-2 2H7c-1 0-2-1-2-2V6"/><path d="M8 6V4c0-1 1-2 2-2h4c1 0 2 1 2 2v2"/><line x1="10" x2="10" y1="11" y2="17"/><line x1="14" x2="14" y1="11" y2="17"/></svg></div></section></main>
</body>
</html>
